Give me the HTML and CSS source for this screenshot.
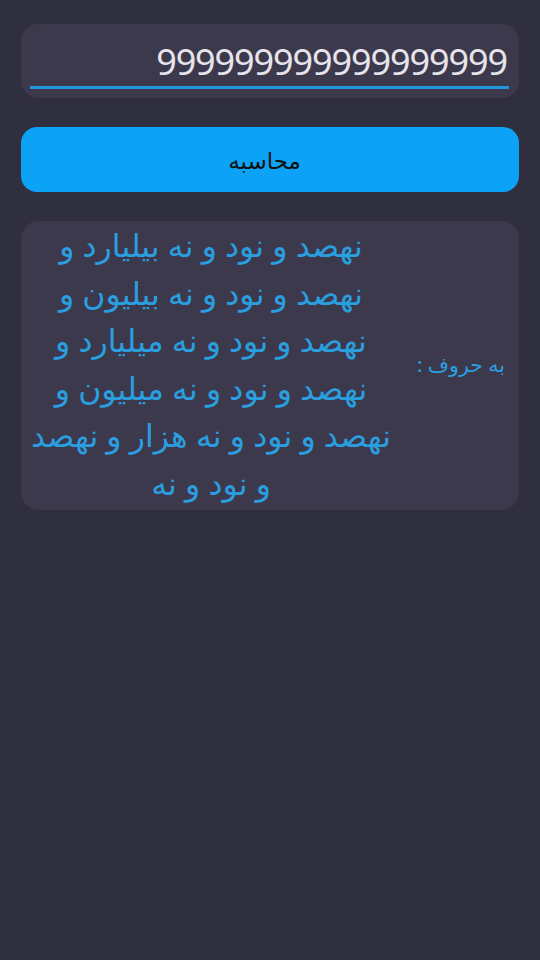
FILE: index.html
```html
<!DOCTYPE html>
<html lang="fa">
<head>
<meta charset="utf-8">
<link rel="stylesheet" href="styles.css">
</head>
<body>
<div class="screen">
  <div class="input-card">
    <div class="input-field">999999999999999999</div>
  </div>
  <div class="calc-btn">محاسبه</div>
  <div class="result-card">
    <div class="label">به حروف :</div>
    <div class="words">نهصد و نود و نه بیلیارد و نهصد و نود و نه بیلیون و نهصد و نود و نه میلیارد و نهصد و نود و نه میلیون و نهصد و نود و نه هزار و نهصد و نود و نه</div>
  </div>
</div>
</body>
</html>
```

FILE: styles.css
```css
html, body {
  margin: 0;
  padding: 0;
  background: #302f3f;
}
body {
  width: 540px;
  height: 960px;
  font-family: "Noto Sans", "DejaVu Sans", sans-serif;
}
.screen {
  padding: 24px 21px;
  display: flex;
  flex-direction: column;
  gap: 29px;
}
.input-card {
  background: #3c394d;
  border-radius: 17px;
  height: 74px;
  padding: 0 10px 0 9px;
  display: flex;
  align-items: flex-start;
}
.input-field {
  flex: 1;
  margin-top: 15px;
  height: 47px;
  border-bottom: 3px solid #1f99dc;
  color: #e6e3ea;
  font-size: 36px;
  line-height: 45px;
  text-align: right;
  padding-right: 2px;
  letter-spacing: -1.1px;
}
.calc-btn {
  height: 65px;
  border-radius: 16px;
  background: #0ca3f6;
  color: #111;
  font-size: 23px;
  display: flex;
  align-items: center;
  justify-content: center;
  padding-right: 11px;
}
.result-card {
  direction: rtl;
  background: #3c394d;
  border-radius: 18px;
  padding: 0 14px 4px 5px;
  display: flex;
  align-items: center;
}
.label {
  color: #2a9fe0;
  font-size: 20.5px;
  width: 109px;
  flex: none;
}
.words {
  flex: 1;
  color: #2a9fe0;
  font-size: 31.5px;
  line-height: 47.5px;
  text-align: center;
}
```
